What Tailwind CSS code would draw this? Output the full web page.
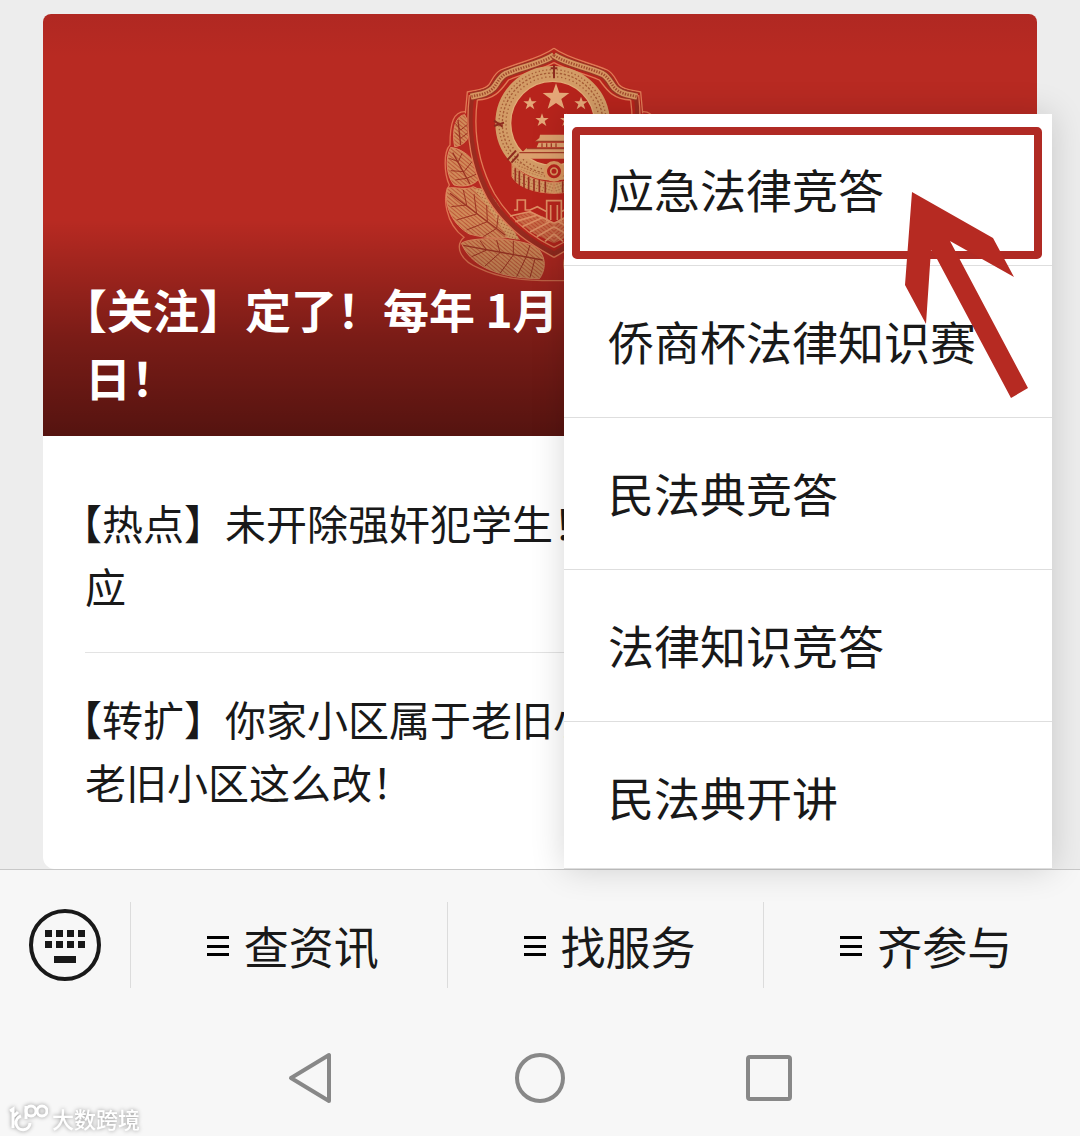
<!DOCTYPE html>
<html lang="zh-CN">

<head>
    <meta charset="UTF-8">
    <meta name="viewport" content="width=device-width, initial-scale=1.0">
    <title>应急法律竞答</title>
    <script src="https://cdn.jsdelivr.net/npm/@tailwindcss/browser@4"></script>
</head>

<body class="flex min-h-screen flex-col bg-white font-['Noto_Sans_CJK_SC',sans-serif] text-[#191919]">

    <main class="relative z-10 bg-[#ededed] px-[43px] pt-[14px]">
        <!-- article card -->
        <div class="overflow-hidden rounded-t-lg rounded-b-xl bg-white">
            <a href="#" class="relative flex h-[422px] flex-col justify-end overflow-hidden bg-linear-to-b from-[#b02822] via-[#b82a22] via-10% to-[#b82a22] pb-[26px] pl-[42px]">
                <svg class="absolute top-4 left-[387px] h-[270px] w-[230px] overflow-visible" viewBox="0 0 690 810" fill="none" aria-hidden="true">
                    <defs>
                        <pattern id="hatch" width="9" height="9" patternUnits="userSpaceOnUse" patternTransform="rotate(40)">
                            <rect width="9" height="9" fill="#bd5a3a" />
                            <path d="M0 3H9" stroke="#dba468" stroke-width="4" />
                        </pattern>
                        <pattern id="dots" width="9" height="9" patternUnits="userSpaceOnUse" patternTransform="rotate(20)">
                            <rect width="9" height="9" fill="#d39a63" />
                            <circle cx="4" cy="4" r="2" fill="#9d4a2c" />
                        </pattern>
                        <g id="half">
                            <!-- branch outline -->
                            <path d="M108 245C70 242 60 280 60 345C40 365 42 430 58 465C36 500 46 580 102 622C76 645 84 690 150 716C210 745 280 752 372 752" stroke="#df7351" stroke-width="4" />
                            <!-- leaves -->
                            <path d="M104 254C72 258 66 310 74 350C96 348 122 330 122 290Z" fill="url(#hatch)" stroke="#dc8a60" stroke-width="3" />
                            <path d="M62 352C44 385 50 440 72 465C110 474 140 462 150 440C142 400 110 358 62 352Z" fill="url(#hatch)" stroke="#dc8a60" stroke-width="3" />
                            <path d="M52 474C40 530 70 585 118 612C170 626 220 628 246 620C240 570 180 490 130 470C105 482 80 470 52 474Z" fill="url(#hatch)" stroke="#dc8a60" stroke-width="3" />
                            <path d="M94 640C120 620 260 620 320 652C350 680 348 720 328 746C240 745 130 725 94 640Z" fill="url(#hatch)" stroke="#dc8a60" stroke-width="3" />
                            <path d="M133 480C170 455 210 530 250 600L270 630L235 625C200 570 170 520 133 480Z" fill="url(#dots)" />
                            <path d="M84 270L92 345M68 368L120 462M60 490L226 616M100 646L338 690" stroke="#9c3423" stroke-width="4" />
                            <path d="M92 300L76 280M92 300L114 282M92 325L76 308M92 325L118 305M85 395L58 385M85 395L96 370M102 425L62 422M102 425L126 395M110 445L76 450M110 445L145 430M110 525L64 530M110 525L100 480M140 552L80 570M140 552L132 492M172 575L110 600M172 575L170 525M200 595L160 620M200 595L205 555M170 660L150 632M170 660L125 680M210 668L200 630M210 668L165 708M250 675L250 632M250 675L210 730M288 682L300 645M288 682L260 740M315 687L300 742" stroke="#9c3423" stroke-width="3" />
                            <!-- shield -->
                            <path d="M372 55C330 86 270 96 212 120C190 132 188 150 176 165C160 182 130 180 112 186L106 250" stroke="#e07a55" stroke-width="4" />
                            <path d="M124 202C112 300 125 400 178 500C232 590 310 640 372 672" stroke="#9a2c20" stroke-width="16" />
                            <path d="M372 76C330 103 275 110 226 132C208 142 202 160 190 174C170 194 145 194 122 200" stroke="#9a3524" stroke-width="26" />
                            <path d="M372 76C330 103 275 110 226 132C208 142 202 160 190 174C170 194 145 194 122 200" stroke="#d69560" stroke-width="18" />
                            <path d="M372 76C330 103 275 110 226 132C208 142 202 160 190 174C170 194 145 194 122 200" stroke="#a14a2e" stroke-width="8" stroke-dasharray="4 4" />
                            <path d="M118 195C106 300 120 410 172 506C228 600 310 648 372 682M142 210C130 300 144 400 194 492C244 575 315 625 372 652M372 98C330 122 290 126 236 150C218 172 200 208 142 210" stroke="#e07a55" stroke-width="4" />
                            <!-- ribbon folds -->
                            <path d="M246 400C280 440 320 455 372 458V490C310 488 262 470 246 440Z" fill="url(#dots)" stroke="#d98a5c" stroke-width="3" />
                            <path d="M256 415V455M268 422V465M282 432V474M296 440V480M312 446V484M328 450V486M346 454V488" stroke="#9a2e20" stroke-width="5" />
                            <!-- wall -->
                            <path d="M256 560L300 545L350 565L372 580V640L310 610L270 580Z" fill="url(#hatch)" opacity=".7" />
                            <path d="M252 540H262V510H286V540H300L322 530L350 545V512H372M240 558L300 545L372 580M256 575L320 556M276 590L340 562M300 606L362 574M320 620L372 590M345 634L372 612M350 545V575M362 525V570" stroke="#dd8d62" stroke-width="5" />
                        </g>
                    </defs>
                    <path d="M372 55C330 86 270 96 212 120L176 165L112 186C100 320 120 410 172 506C228 600 310 648 372 682C434 648 516 600 572 506C624 410 644 320 632 186L568 165L532 120C474 96 414 86 372 55Z" fill="#b7241c" />
                    <use href="#half" />
                    <use href="#half" transform="matrix(-1 0 0 1 744 0)" />
                    <!-- wreath ring -->
                    <circle cx="368" cy="280" r="149" stroke="#d39c66" stroke-width="46" />
                    <g stroke="#a65c36" stroke-width="4">
                        <circle cx="368" cy="280" r="161" stroke-dasharray="4 7" />
                        <circle cx="368" cy="280" r="151" stroke-dasharray="7 5" />
                        <circle cx="368" cy="280" r="140" stroke-dasharray="4 8" />
                    </g>
                    <circle cx="368" cy="280" r="126" stroke="#e2ab76" stroke-width="4" />
                    <path d="M372 105V145M362 115H382M192 272L218 290M192 288L222 278M232 390L258 362M244 398L268 372" stroke="#8d2a1e" stroke-width="6" />
                    <!-- stars -->
                    <g fill="#e5a878">
                        <path d="M378 160L388 188L418 189L394 207L403 236L378 219L353 236L362 207L338 189L368 188Z" />
                        <path d="M300 200L305 214L320 214L308 223L313 238L300 229L287 238L292 223L280 214L295 214Z" />
                        <path d="M453 200L458 214L473 214L461 223L466 238L453 229L440 238L445 223L433 214L448 214Z" />
                        <path d="M336 250L341 264L356 264L344 273L349 288L336 279L323 288L328 273L316 264L331 264Z" />
                        <path d="M410 250L415 264L430 264L418 273L423 288L410 279L397 288L402 273L390 264L405 264Z" />
                    </g>
                    <!-- gate tower -->
                    <path d="M330 314H420V324L430 334H316L328 324ZM326 338H424V352H320ZM290 354H454L462 364H280ZM266 364H480V386H266Z" fill="#dba06d" />
                    <path d="M318 334H430M290 356H450M268 368H478M336 340V352M350 340V352M364 340V352M378 340V352" stroke="#a43c28" stroke-width="4" />
                    <path d="M262 392C300 422 325 432 372 436C420 432 446 422 482 392V410C440 450 300 450 262 410Z" fill="url(#dots)" />
                    <circle cx="372" cy="424" r="26" fill="#b7241c" stroke="#d9965f" stroke-width="10" />
                    <circle cx="372" cy="424" r="10" stroke="#d9965f" stroke-width="5" />
                </svg>
                <div class="absolute inset-x-0 bottom-0 h-[216px] bg-linear-to-t from-black/54 via-black/34 via-45% to-transparent"></div>
                <h1 class="relative -indent-6 text-[46px] leading-[68px] font-bold whitespace-nowrap text-white">【关注】定了！每年 1月<br>日！</h1>
            </a>
            <div class="px-[42px]">
                <a href="#" class="block border-b border-[#e3e3e3] pt-[55px] pb-[35px] text-[41px] leading-[63px] whitespace-nowrap -indent-6">【热点】未开除强奸犯学生！<br>应</a>
                <a href="#" class="block pt-[34px] pb-[56px] text-[41px] leading-[63px] whitespace-nowrap -indent-6">【转扩】你家小区属于老旧小区<br>老旧小区这么改！</a>
            </div>
        </div>

        <!-- submenu opened above the bar -->
        <nav class="absolute right-7 bottom-0 w-[488px] divide-y divide-[#dedede] bg-white text-[46px] shadow-[0_0_32px_rgba(0,0,0,0.16)]">
            <a href="#" class="flex h-[152px] items-center pb-[2px] pl-11">应急法律竞答</a>
            <a href="#" class="flex h-[152px] items-center pb-[2px] pl-11">侨商杯法律知识赛</a>
            <a href="#" class="flex h-[152px] items-center pb-[2px] pl-11">民法典竞答</a>
            <a href="#" class="flex h-[152px] items-center pb-[2px] pl-11">法律知识竞答</a>
            <a href="#" class="flex h-[147px] items-center pt-[2px] pl-11">民法典开讲</a>
            <div class="pointer-events-none absolute top-[13px] right-[10px] left-2 h-[132px] rounded-[5px] border-8 border-[#b02a24]"></div>
            <svg class="pointer-events-none absolute top-[78px] right-6 h-[207px] w-[124px]" viewBox="904 192 124 207" aria-hidden="true">
                <path d="M912 192L993 238L1014 277L950 241L1028 388L1011 398L937 259L931 250L926 324L905 285Z" fill="#b62a22" />
            </svg>
        </nav>
    </main>

    <footer class="relative flex h-[267px] flex-col border-t border-[#c8c8c8] bg-[#f7f7f7]">
        <div class="flex h-[150px] items-center">
            <button class="flex h-[86px] w-[131px] items-center justify-center border-r border-[#dcdcdc]" aria-label="键盘">
                <svg class="size-[74px]" viewBox="0 0 74 74" fill="none" aria-hidden="true">
                    <circle cx="37" cy="37" r="34" stroke="#191919" stroke-width="4" />
                    <path d="M17 22h7v7h-7zM28 22h7v7h-7zM39 22h7v7h-7zM50 22h7v7h-7zM17 33h7v7h-7zM28 33h7v7h-7zM39 33h7v7h-7zM50 33h7v7h-7zM26 48h22v7H26z" fill="#191919" />
                </svg>
            </button>
            <button class="flex h-[86px] flex-1 items-center justify-center gap-[15px] border-r border-[#dcdcdc] pt-[2px] pl-2 text-[45px]">
                <svg class="h-[22px] w-[22px]" viewBox="0 0 22 22" aria-hidden="true"><path d="M0 1h22v3H0zM0 10h22v3H0zM0 18h22v3H0z" /></svg>
                查资讯
            </button>
            <button class="flex h-[86px] flex-1 items-center justify-center gap-[15px] border-r border-[#dcdcdc] pt-[2px] pl-2 text-[45px]">
                <svg class="h-[22px] w-[22px]" viewBox="0 0 22 22" aria-hidden="true"><path d="M0 1h22v3H0zM0 10h22v3H0zM0 18h22v3H0z" /></svg>
                找服务
            </button>
            <button class="flex h-[86px] flex-1 items-center justify-center gap-[15px] pt-[2px] pl-2 text-[45px]">
                <svg class="h-[22px] w-[22px]" viewBox="0 0 22 22" aria-hidden="true"><path d="M0 1h22v3H0zM0 10h22v3H0zM0 18h22v3H0z" /></svg>
                齐参与
            </button>
        </div>
        <!-- system keys -->
        <div class="flex h-[116px] items-center justify-center gap-[177px]">
            <button aria-label="返回">
                <svg class="size-[52px]" viewBox="0 0 52 52" fill="none" stroke="#888" stroke-width="4" stroke-linejoin="round" aria-hidden="true"><path d="M6 26L44 3V49Z" /></svg>
            </button>
            <button aria-label="主页">
                <svg class="size-[52px]" viewBox="0 0 52 52" fill="none" stroke="#888" stroke-width="4" aria-hidden="true"><circle cx="26" cy="26" r="23" /></svg>
            </button>
            <button aria-label="最近任务">
                <svg class="size-[52px]" viewBox="0 0 52 52" fill="none" stroke="#888" stroke-width="4" aria-hidden="true"><rect x="5" y="5" width="42" height="42" rx="2" /></svg>
            </button>
        </div>
        <div class="absolute bottom-0 left-2 flex items-center gap-1 text-[22px] leading-[36px] font-medium text-white drop-shadow-[0_0_2px_rgba(0,0,0,0.4)]">
            <svg class="h-[30px] w-10" viewBox="0 0 40 30" fill="none" stroke="#fff" stroke-width="3" aria-hidden="true">
                <path d="M2 8L5 6V25M5 14L10 9M22 20A7 7 0 1 1 13 13M18 3V16" />
                <circle cx="23" cy="8" r="5" />
                <circle cx="34" cy="8" r="5" />
            </svg>
            大数跨境
        </div>
    </footer>

</body>

</html>
